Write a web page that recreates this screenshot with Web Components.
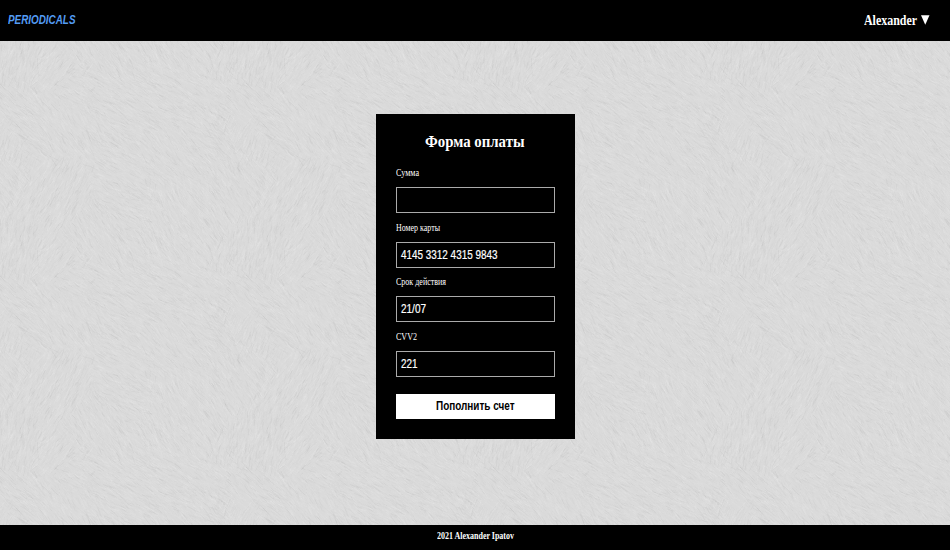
<!DOCTYPE html>
<html lang="ru">
<head>
<meta charset="utf-8">
<title>Periodicals</title>
<style>
body { margin: 0; }
</style>
</head>
<body>
<periodicals-page>
  <site-header slot="header">
    <fit-text slot="brand" width="67.5">PERIODICALS</fit-text>
    <fit-text slot="user" width="53">Alexander</fit-text>
  </site-header>
  <payment-form>
    <fit-text slot="title" width="99.5">Форма оплаты</fit-text>
    <form-field><fit-text slot="label" width="23">Сумма</fit-text></form-field>
    <form-field><fit-text slot="label" width="44">Номер карты</fit-text><fit-text width="96.5">4145 3312 4315 9843</fit-text></form-field>
    <form-field><fit-text slot="label" width="50">Срок действия</fit-text><fit-text width="25">21/07</fit-text></form-field>
    <form-field><fit-text slot="label" width="21">CVV2</fit-text><fit-text width="16.5">221</fit-text></form-field>
    <fit-text slot="action" width="78.5">Пополнить счет</fit-text>
  </payment-form>
  <site-footer slot="footer"><fit-text width="77">2021 Alexander Ipatov</fit-text></site-footer>
</periodicals-page>
<script>
function define(name, html, setup) {
  const template = document.createElement('template');
  template.innerHTML = html;
  customElements.define(name, class extends HTMLElement {
    constructor() {
      super();
      this.attachShadow({ mode: 'open' }).append(template.content.cloneNode(true));
    }
    connectedCallback() { if (setup) setup(this); }
  });
}

// Backdrop: a repeating tile of fine fur strokes along a slowly turning direction field.
function drawFur(host) {
  const W = 247, H = 192;
  let seed = 71;
  const rnd = () => (seed = (seed * 16807) % 2147483647) / 2147483647;
  const tufts = [];
  for (let i = 0; i < 22; i++) tufts.push([rnd() * W, rnd() * H, rnd() < .65 ? .3 + rnd() * .75 : 1.2 + rnd() * 1.3]);
  const wrap = (d, s) => { d = Math.abs(d); return Math.min(d, s - d); };
  const shades = ['#f0f0f0', '#e8e8e8', '#c2c2c2', '#a8a8a8'];
  const paths = ['', '', '', ''];
  for (let i = 0; i < 10000; i++) {
    const x = rnd() * W, y = rnd() * H;
    let best = 1e9, a = 0;
    for (const t of tufts) {
      const d = Math.hypot(wrap(x - t[0], W), wrap(y - t[1], H)) + rnd() * 18;
      if (d < best) { best = d; a = t[2]; }
    }
    a += (rnd() - .5) * .5;
    const len = 3 + rnd() * 8, dx = Math.cos(a) * len, dy = Math.sin(a) * len, b = (rnd() - .5) * 1.4;
    const pick = rnd(), k = pick < .26 ? 0 : pick < .56 ? 1 : pick < .93 ? 2 : 3;
    for (const ox of x + dx > W ? [0, -W] : x + dx < 0 ? [0, W] : [0])
      for (const oy of y + dy > H ? [0, -H] : [0])
        paths[k] += `M${(x + ox).toFixed(1)} ${(y + oy).toFixed(1)}q${(dx / 2 + b).toFixed(1)} ${(dy / 2 - b).toFixed(1)} ${dx.toFixed(1)} ${dy.toFixed(1)}`;
  }
  host.shadowRoot.querySelector('pattern').innerHTML =
    `<rect width="${W}" height="${H}" fill="#dadada"/>` +
    paths.map((d, i) => `<path d="${d}" fill="none" stroke="${shades[i]}" stroke-width=".33" opacity=".38"/>`).join('');
}

define('fur-backdrop', `
<style>:host{display:block} svg{display:block;width:100%;height:100%}</style>
<svg><defs><pattern id="fur" width="247" height="192" patternUnits="userSpaceOnUse"></pattern></defs>
<rect width="100%" height="100%" fill="url(#fur)"/></svg>`, drawFur);

define('periodicals-page', `
<style>
:host{display:grid;grid-template-rows:41px 484px 25px;height:550px;color:#fff;font-family:"Liberation Serif",serif;overflow:hidden}
main{display:grid;overflow:hidden}
main>*{grid-area:1/1}
.center{display:flex;justify-content:center;align-items:flex-start;padding-top:73px;z-index:1}
</style>
<slot name="header"></slot><main><fur-backdrop></fur-backdrop><div class="center"><slot></slot></div></main><slot name="footer"></slot>`);

define('site-header', `
<style>
:host{display:flex;justify-content:space-between;align-items:center;box-sizing:border-box;padding:0 20.5px 2px 7.5px;background:#000}
.brand{font:italic bold 12px/14px "Liberation Sans",sans-serif;color:#549cf4}
.user{display:flex;align-items:center;gap:4.5px;font-weight:bold;font-size:14px;line-height:16px;padding-top:2px}
svg{display:block;width:8.5px;height:10px;margin-top:-1px}
</style>
<div class="brand"><slot name="brand"></slot></div>
<div class="user"><slot name="user"></slot><svg viewBox="0 0 8.5 10"><path d="M0 .3h8.5L4.25 9.7z" fill="#fff"/></svg></div>`);

define('payment-form', `
<style>
:host{display:block;box-sizing:border-box;width:199px;height:325px;background:#000;padding:17px 20px 0}
h1{margin:0 0 16.4px;font-size:17.5px;line-height:21px;text-align:center}
button{display:block;width:159px;height:25px;margin-top:7.6px;border:0;padding:0;background:#fff;color:#000;font:bold 12px/14px "Liberation Sans",sans-serif}
</style>
<h1><slot name="title"></slot></h1><slot></slot><button type="button"><slot name="action"></slot></button>`);

define('form-field', `
<style>
:host{display:block;height:54.5px}
.label{font-size:9.5px;line-height:10px;height:19px}
.box{display:flex;align-items:center;box-sizing:border-box;height:26px;border:1px solid #aaa;padding:0 4px 0 4.5px;font:12px/14px "Liberation Sans",sans-serif;-webkit-text-stroke:.2px #fff}
</style>
<div class="label"><slot name="label"></slot></div><div class="box"><slot></slot></div>`);

define('site-footer', `
<style>:host{display:flex;justify-content:center;align-items:flex-start;box-sizing:border-box;background:#000;padding-top:6px;font-weight:bold;font-size:9.5px;line-height:11px}</style>
<slot></slot>`);

// Narrows its text to the given width; defined last, so that its surroundings already set its font.
define('fit-text', `
<style>:host{display:inline-block;white-space:nowrap} span{display:inline-block;transform-origin:0 50%}</style>
<span><slot></slot></span>`, el => {
  const w = +el.getAttribute('width');
  const s = el.shadowRoot.querySelector('span');
  s.style.transform = `scaleX(${w / s.getBoundingClientRect().width})`;
  el.style.width = w + 'px';
});
</script>
</body>
</html>
